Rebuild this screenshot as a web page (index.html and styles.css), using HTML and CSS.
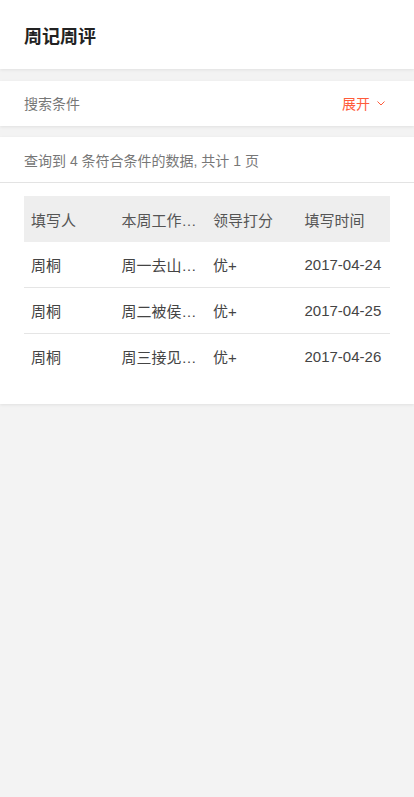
FILE: index.html
```html
<!DOCTYPE html>
<html lang="zh-CN">
<head>
<meta charset="utf-8">
<title>周记周评</title>
<link rel="stylesheet" href="styles.css">
</head>
<body>
<header class="topbar">
  <h1 class="title">周记周评</h1>
</header>
<section class="card search">
  <span class="search-label">搜索条件</span>
  <span class="toggle">展开
    <svg class="chev" width="8" height="5" viewBox="0 0 8 5"><path d="M0.5 0.5 L4 4 L7.5 0.5" fill="none" stroke="#ff5b3a" stroke-width="1"/></svg>
  </span>
</section>
<section class="card results">
  <div class="summary">查询到 4 条符合条件的数据, 共计 1 页</div>
  <div class="table-wrap">
    <table class="table">
      <thead>
        <tr><th>填写人</th><th>本周工作…</th><th>领导打分</th><th>填写时间</th></tr>
      </thead>
      <tbody>
        <tr><td>周桐</td><td>周一去山…</td><td>优+</td><td>2017-04-24</td></tr>
        <tr><td>周桐</td><td>周二被侯…</td><td>优+</td><td>2017-04-25</td></tr>
        <tr><td>周桐</td><td>周三接见…</td><td>优+</td><td>2017-04-26</td></tr>
      </tbody>
    </table>
  </div>
</section>
</body>
</html>
```
FILE: styles.css
```css
html, body {
  margin: 0;
  padding: 0;
}
body {
  background: #f3f3f3;
  font-family: "Liberation Sans", "Noto Sans CJK SC", sans-serif;
  color: #333;
  min-height: 797px;
}
.topbar {
  background: #fff;
  height: 69px;
  display: flex;
  align-items: center;
  padding: 0 24px;
  box-shadow: 0 1px 3px rgba(0,0,0,0.08);
}
.title {
  margin: 0;
  font-size: 18px;
  font-weight: bold;
  color: #222;
}
.card {
  background: #fff;
  box-shadow: 0 1px 3px rgba(0,0,0,0.08);
}
.search {
  margin-top: 12px;
  height: 45px;
  display: flex;
  align-items: center;
  justify-content: space-between;
  padding: 0 29px 0 24px;
}
.search-label {
  font-size: 14px;
  color: #777;
  margin-top: -2px;
}
.toggle {
  font-size: 14px;
  color: #ff5b3a;
  display: flex;
  align-items: center;
  gap: 7px;
  margin-top: -2px;
}
.chev {
  display: block;
  margin-top: 1px;
}
.results {
  margin-top: 11px;
  padding-bottom: 25px;
}
.summary {
  height: 45px;
  display: flex;
  align-items: center;
  padding: 0 24px;
  font-size: 14px;
  color: #777;
  border-bottom: 1px solid #e3e3e3;
}
.table-wrap {
  padding: 13px 24px 0;
}
.table {
  width: 100%;
  border-collapse: collapse;
  table-layout: fixed;
  font-size: 15px;
}
.table th {
  background: #eeeeee;
  font-weight: normal;
  color: #555;
  text-align: left;
  height: 46px;
  padding: 0 0 0 7px;
}
.table td {
  height: 45px;
  padding: 0 0 0 6px;
  color: #444;
  border-bottom: 1px solid #e5e5e5;
  white-space: nowrap;
}
.table th {
  padding-left: 6px;
}
.table th:first-child, .table td:first-child {
  padding-left: 7px;
}
.table tbody tr:last-child td {
  border-bottom: none;
}
```
